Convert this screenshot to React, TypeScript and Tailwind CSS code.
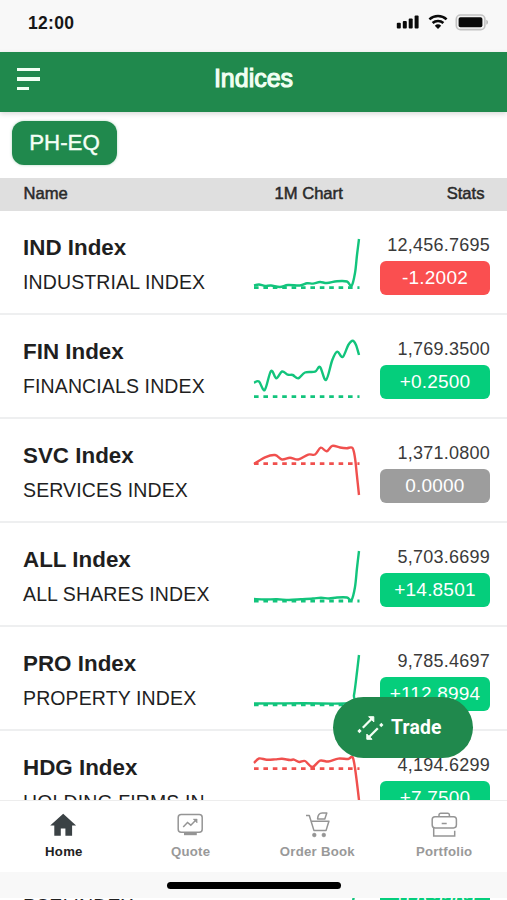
import React, { useState } from "react";

type Point = [number, number];

interface IndexRow {
  symbol: string;
  name: string;
  price: string;
  change: string;
  trend: "up" | "down";
  chip: "red" | "green" | "gray";
  baseline: number;
  points: Point[];
}

const indices: IndexRow[] = [
  {
    symbol: "IND Index",
    name: "INDUSTRIAL INDEX",
    price: "12,456.7695",
    change: "-1.2002",
    trend: "up",
    chip: "red",
    baseline: 76.7,
    points: [[1, 74.5], [6, 73.5], [12, 75], [18, 74.5], [27, 76], [35, 74], [47, 74.5], [54, 72.3], [60, 72.6], [67, 71], [74, 72], [84, 70.2], [94, 70.5], [98.5, 75], [102, 62], [104, 44], [106, 28]],
  },
  {
    symbol: "FIN Index",
    name: "FINANCIALS INDEX",
    price: "1,769.3500",
    change: "+0.2500",
    trend: "up",
    chip: "green",
    baseline: 81.7,
    points: [[1, 67.7], [6, 66.5], [11.7, 75], [18, 56], [23.3, 63.3], [29, 56.5], [34.7, 59.7], [39.7, 60], [45.3, 63.3], [52, 57.5], [62, 56.7], [67, 52], [73, 65], [79.3, 45], [84.3, 36.7], [89.7, 42], [95.3, 30], [99.7, 25.7], [103, 30], [106, 40]],
  },
  {
    symbol: "SVC Index",
    name: "SERVICES INDEX",
    price: "1,371.0800",
    change: "0.0000",
    trend: "down",
    chip: "gray",
    baseline: 44.7,
    points: [[1, 45], [12, 38.3], [22, 36], [29, 40.5], [37, 38.7], [45.3, 40.5], [55.3, 35.6], [62, 35.5], [67.7, 28.7], [73.7, 32.3], [79.3, 26.8], [87, 28.5], [93.7, 29.2], [99.5, 29], [102, 39], [103.7, 54.3], [106, 76]],
  },
  {
    symbol: "ALL Index",
    name: "ALL SHARES INDEX",
    price: "5,703.6699",
    change: "+14.8501",
    trend: "up",
    chip: "green",
    baseline: 78,
    points: [[1, 76], [12, 76.5], [24, 76.3], [36, 77], [48, 76.3], [60, 75.5], [68, 74.7], [76, 75.5], [84, 74.5], [94, 74.5], [98.5, 77], [102, 64], [104, 45], [106, 28]],
  },
  {
    symbol: "PRO Index",
    name: "PROPERTY INDEX",
    price: "9,785.4697",
    change: "+112.8994",
    trend: "up",
    chip: "green",
    baseline: 77.8,
    points: [[1, 76.5], [50, 76.3], [98, 76], [101, 68], [104, 45], [106, 28]],
  },
  {
    symbol: "HDG Index",
    name: "HOLDING FIRMS IN",
    price: "4,194.6299",
    change: "+7.7500",
    trend: "down",
    chip: "green",
    baseline: 37.7,
    points: [[1, 32], [6, 27.5], [13.7, 28.7], [22, 28.4], [29, 27.8], [37, 29], [41, 28.6], [46.3, 31], [52, 30], [59.3, 36], [67, 29.7], [75.3, 30.5], [85.3, 27.6], [95.3, 28], [99.5, 26], [102, 37], [106, 69], [106.4, 75]],
  },
  {
    symbol: "PSEi Index",
    name: "PSEI INDEX",
    price: "6,662.4702",
    change: "+50.2202",
    trend: "up",
    chip: "green",
    baseline: 77,
    points: [[1, 75], [40, 76], [80, 74], [96, 74], [100, 66], [106, 28]],
  },
];

const chipColors = {
  red: "bg-[#fa4f50]",
  green: "bg-[#05ce7c]",
  gray: "bg-[#9d9d9d]",
};

// Catmull-Rom through the points, written out as beziers
function smooth(points: Point[]) {
  let d = `M${points[0][0]} ${points[0][1]}`;
  for (let i = 0; i < points.length - 1; i++) {
    const p0 = points[i - 1] || points[i];
    const p1 = points[i];
    const p2 = points[i + 1];
    const p3 = points[i + 2] || p2;
    d += ` C${p1[0] + (p2[0] - p0[0]) / 6} ${p1[1] + (p2[1] - p0[1]) / 6} ${p2[0] - (p3[0] - p1[0]) / 6} ${p2[1] - (p3[1] - p1[1]) / 6} ${p2[0]} ${p2[1]}`;
  }
  return d;
}

function Sparkline({ row }: { row: IndexRow }) {
  const color = row.trend === "up" ? "#12c47c" : "#f0504e";
  return (
    <svg width="108" height="103" viewBox="0 0 108 103" fill="none" stroke={color} className="shrink-0">
      <path d={`M1 ${row.baseline}H106.5`} strokeWidth="2.8" strokeDasharray="4.6 4.8" />
      <path d={smooth(row.points)} strokeWidth="2.4" strokeLinejoin="round" />
    </svg>
  );
}

function Row({ row }: { row: IndexRow }) {
  return (
    <div className="flex h-[104px] shrink-0 border-b-2 border-[#eeeff0] pl-[23px] pr-[17px]">
      <div className="w-[230px] shrink-0 whitespace-nowrap pt-[23px] text-[#1f1f1f]">
        <div className="text-[22.4px] font-bold leading-7">{row.symbol}</div>
        <div className="mt-[6px] text-[19.5px] leading-7 tracking-[0.12px]">{row.name}</div>
      </div>
      <Sparkline row={row} />
      <div className="flex flex-1 flex-col items-end pt-[21px]">
        <div className="text-[18px] leading-[27px] tracking-[0.25px] text-[#3a3a3a]">{row.price}</div>
        <div
          className={`mt-[2px] flex h-[34px] w-[110px] items-center justify-center rounded-[6px] text-[19px] tracking-[0.2px] text-white ${chipColors[row.chip]}`}
        >
          {row.change}
        </div>
      </div>
    </div>
  );
}

function HomeIcon() {
  return (
    <svg width="28" height="28" viewBox="0 0 28 28" fill="#3b4245">
      <path d="M14.2 2.7 1.2 14.6h4.1v10.2h6.5v-7.3h4.6v7.3h6.7V14.6h4z" />
    </svg>
  );
}

function QuoteIcon() {
  return (
    <svg width="28" height="28" viewBox="0 0 28 28" fill="none" stroke="#959595" strokeWidth="1.5">
      <rect x="2.2" y="3.4" width="24" height="17.8" rx="3" />
      <path d="M7.2 16l4.3-4.5 3.3 2.7 5.4-5.4" />
      <path d="M17.2 8.1h3.9V12z" fill="#959595" strokeWidth="0.5" />
      <path d="M8 22.9h12.8" strokeWidth="2.6" />
    </svg>
  );
}

function OrderIcon() {
  return (
    <svg width="28" height="28" viewBox="0 0 28 28" fill="none" stroke="#959595" strokeWidth="1.5" strokeLinejoin="round">
      <path d="M3 4.5h3.3l4.6 14.9h12.2l2.8-9.2H8.1" />
      <path d="M14.6 7.9c.2-3.7 1.8-5.9 4.6-5.9h4.6l-2 5.9z" />
      <circle cx="11.3" cy="24" r="1.9" fill="#959595" strokeWidth="0.5" />
      <circle cx="20.8" cy="24" r="1.9" fill="#959595" strokeWidth="0.5" />
    </svg>
  );
}

function PortfolioIcon() {
  return (
    <svg width="28" height="28" viewBox="0 0 28 28" fill="none" stroke="#959595" strokeWidth="1.5">
      <path d="M9 5.7V4a1.7 1.7 0 0 1 1.7-1.7h7A1.7 1.7 0 0 1 19.4 4v1.7" />
      <rect x="2.2" y="5.7" width="24.2" height="11.2" rx="2.8" />
      <path d="M3.7 16.9v8.2h21v-5.4M11.7 12.6h5" />
    </svg>
  );
}

const tabs = [
  { label: "Home", icon: HomeIcon },
  { label: "Quote", icon: QuoteIcon },
  { label: "Order Book", icon: OrderIcon },
  { label: "Portfolio", icon: PortfolioIcon },
];

function StatusBar() {
  return (
    <div className="flex h-[52px] shrink-0 items-center justify-between bg-[#f8f8f8] pb-[6px] pl-[28px] pr-[18px]">
      <span className="text-[17.5px] font-bold tracking-[0.3px] text-[#161616]">12:00</span>
      <svg width="94" height="18" viewBox="0 0 94 18" fill="#0a0a0a">
        <rect x="1.8" y="8.7" width="4" height="5.7" rx="1" />
        <rect x="7.8" y="7" width="4" height="7.4" rx="1" />
        <rect x="13.7" y="4.4" width="4" height="10" rx="1" />
        <rect x="19.6" y="1.5" width="4" height="12.9" rx="1" />
        <g fill="none" stroke="#0a0a0a" strokeWidth="2.5">
          <path d="M34.4 5.4a12.6 12.6 0 0 1 17.2 0" />
          <path d="M37.6 9a8 8 0 0 1 10.8 0" />
        </g>
        <path d="M39.8 11.7a4.9 4.9 0 0 1 6.4 0L43 15z" />
        <rect x="61.3" y="1" width="28.6" height="14.6" rx="4.2" fill="#f4f4f4" stroke="#c2c2c2" strokeWidth="1.6" />
        <rect x="63.6" y="3.3" width="23.8" height="10" rx="1.8" />
        <path d="M91.4 5.8v5c2-.7 2-4.3 0-5z" fill="#b0b0b0" />
      </svg>
    </div>
  );
}

export default function IndicesScreen() {
  const [activeTab, setActiveTab] = useState("Home");

  return (
    <div className="relative flex h-[900px] w-[507px] flex-col overflow-hidden bg-white font-['Liberation_Sans',Arial,sans-serif]">
      <StatusBar />

      {/* App bar */}
      <header className="z-10 grid h-[60px] shrink-0 grid-cols-[60px_1fr_60px] items-center bg-[#20894d] shadow-[0_2px_5px_rgba(0,0,0,0.15)]">
        <button className="flex flex-col items-start gap-[6px] pb-[6px] pl-[17px]">
          <span className="h-[3.5px] w-[23px] bg-[#f1fff3]" />
          <span className="h-[3.5px] w-[23px] bg-[#f1fff3]" />
          <span className="h-[3.5px] w-[12px] bg-[#f1fff3]" />
        </button>
        <h1 className="pb-[6px] text-center text-[25px] text-[#f1fff3] [-webkit-text-stroke:1.1px_#f1fff3]">
          Indices
        </h1>
      </header>

      <div className="h-[66px] shrink-0 pl-[12px] pt-[9px]">
        <button className="flex h-[44px] w-[105px] items-center justify-center rounded-[12px] bg-[#20894d] text-[22.3px] text-[#f4fff6] shadow-[0_0_3px_rgba(32,137,77,0.35)] [-webkit-text-stroke:0.4px_#f4fff6]">
          PH-EQ
        </button>
      </div>

      {/* Column titles */}
      <div className="flex h-[33px] shrink-0 items-center bg-[#dfdfdf] pl-[23.5px] pr-[22.5px] text-[16.6px] text-[#2a2a2a] [-webkit-text-stroke:0.5px_#2a2a2a]">
        <span className="w-[251px]">Name</span>
        <span className="flex-1">1M Chart</span>
        <span>Stats</span>
      </div>

      <div className="flex flex-1 flex-col overflow-hidden">
        {indices.map((row) => (
          <Row key={row.symbol} row={row} />
        ))}
      </div>

      {/* Floating trade button */}
      <button className="absolute left-[333px] top-[697px] flex h-[61px] w-[140px] items-center rounded-full bg-[#20894d] pl-[24px] text-white">
        <svg width="28" height="28" viewBox="0 0 28 28" fill="none" stroke="#f4fff6" strokeWidth="2.3">
          <path d="M5.8 13.7 14.5 5" />
          <path d="M11.6 2.7h5.2v5.2z" fill="#f4fff6" strokeWidth="1" />
          <path d="M1.4 18.1l2.2-2.2" strokeWidth="2.9" />
          <path d="M20.8 14.3l-8.7 8.7" />
          <path d="M15 25.3H9.8v-5.2z" fill="#f4fff6" strokeWidth="1" />
          <path d="M23.2 12.1l2.2-2.2" strokeWidth="2.9" />
        </svg>
        <span className="ml-[6px] pt-[2px] font-['Roboto',sans-serif] text-[19.3px] font-bold tracking-[0.2px]">Trade</span>
      </button>

      {/* Bottom navigation */}
      <div className="absolute inset-x-0 bottom-[2px] flex h-[98px] flex-col">
        <nav className="grid h-[72px] grid-cols-4 border-t border-[#ededed] bg-white">
          {tabs.map(({ label, icon: Icon }) => (
            <button
              key={label}
              onClick={() => setActiveTab(label)}
              className={`flex flex-col items-center whitespace-nowrap pt-[10px] text-[13.2px] font-bold leading-5 tracking-[0.25px] ${
                label === activeTab ? "text-[#222]" : "text-[#999]"
              }`}
            >
              <Icon />
              <span className="mt-[3px] pl-px">{label}</span>
            </button>
          ))}
        </nav>
        <div className="flex flex-1 justify-center bg-[#f8f8f8] pt-[10px]">
          <div className="h-[6.5px] w-[174px] rounded-full bg-black" />
        </div>
      </div>
    </div>
  );
}
